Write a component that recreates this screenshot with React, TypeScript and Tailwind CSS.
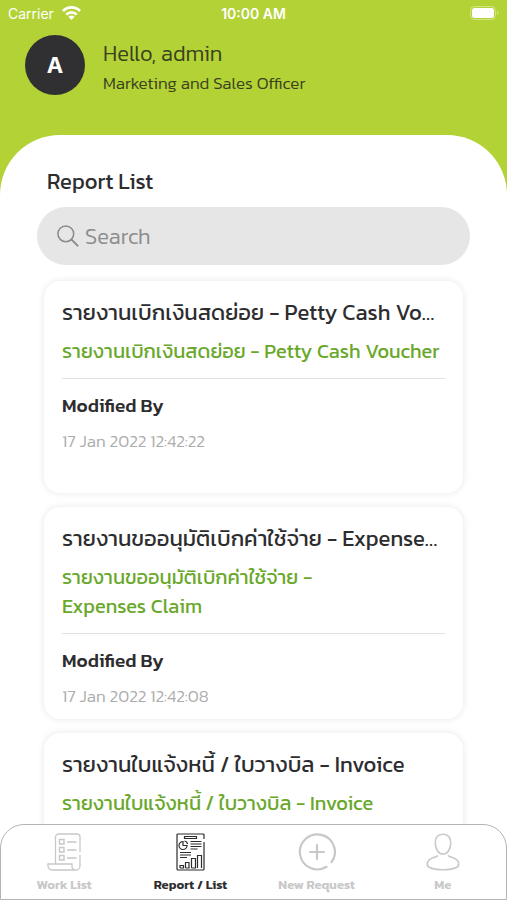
import { ReactNode } from "react";

type Report = {
  title: string;
  modified?: string;
};

const reports: Report[] = [
  {
    title: "รายงานเบิกเงินสดย่อย - Petty Cash Voucher",
    modified: "17 Jan 2022 12:42:22",
  },
  {
    title: "รายงานขออนุมัติเบิกค่าใช้จ่าย - Expenses\u00a0Claim",
    modified: "17 Jan 2022 12:42:08",
  },
  {
    title: "รายงานใบแจ้งหนี้ / ใบวางบิล - Invoice",
  },
];

const WifiIcon = () => (
  <svg className="w-[19px] h-[14px]" viewBox="0 0 19 14" fill="none" stroke="#fff" strokeWidth="2.7">
    <path d="M1 5a12 12 0 0 1 17 0" />
    <path d="M4.2 8.6a7.6 7.6 0 0 1 10.6 0" />
    <path d="M9.5 14 6.4 10.8a4.4 4.4 0 0 1 6.2 0Z" fill="#fff" stroke="none" />
  </svg>
);

const BatteryIcon = () => (
  <svg className="w-[29px] h-[14px]" viewBox="0 0 29 14">
    <rect x="0.5" y="0.5" width="25" height="13" rx="4" fill="none" stroke="#fff" strokeOpacity="0.4" />
    <rect x="2" y="2" width="22" height="10" rx="2.5" fill="#fff" />
    <path d="M27 5v4c2-.8 2-3.2 0-4Z" fill="#fff" fillOpacity="0.4" />
  </svg>
);

const SearchIcon = () => (
  <svg className="w-[22px] h-[22px] shrink-0" viewBox="0 0 22 22" fill="none" stroke="#8b8b8b" strokeLinecap="round">
    <circle cx="8.8" cy="8.8" r="7.9" strokeWidth="1.5" />
    <path d="m14.6 14.6 6 6" strokeWidth="2" />
  </svg>
);

const WorkIcon = () => (
  <svg className="w-[34px] h-[38px]" viewBox="0 0 34 38" fill="none" stroke="currentColor" strokeWidth="1.3">
    <path d="M8.5 31V4a3 3 0 0 1 3-3H30a3 3 0 0 1 3 3v15M33 22v11a4 4 0 0 1-4 4H5a4 4 0 0 1-4-4v-2h24v2.5a3.5 3.5 0 0 0 4 3.5" />
    <path
      d="M12.5 6.5h4.5v4.5h-4.5ZM12.5 14.5h4.5v4.5h-4.5ZM12.5 22.5h4.5v4.5h-4.5ZM20 9h9.5M20 17h9.5M20 25h9.5"
      strokeWidth="1.5"
    />
  </svg>
);

const ReportIcon = () => (
  <svg className="w-[29px] h-[38px]" viewBox="0 0 29 38" fill="none" stroke="currentColor" strokeWidth="1.2">
    <path d="M28 6V2a1 1 0 0 0-1-1H2a1 1 0 0 0-1 1v34a1 1 0 0 0 1 1h25a1 1 0 0 0 1-1V9" />
    <path d="M8.5 3.5h12v2h-12Z" />
    <path d="M7 8.5a4 4 0 1 0 4 4H7ZM8.5 8a3.5 3.5 0 0 1 3 3" />
    <path d="M14.5 8.5h11M14.5 11h11M14.5 13.5h11M14.5 16h7M4 19.5h11M4 22h11M4 24.5h7" strokeWidth="1" />
    <path d="M4 35v-2.500h3.500V35H4M9.500 35v-5.500h3.500V35h-3.500M15.500 35V25.500h4V35h-4M21.500 35V22.500h4V35" />
  </svg>
);

const AddIcon = () => (
  <svg className="w-[38px] h-[38px]" viewBox="0 0 38 38" fill="none" stroke="currentColor" strokeWidth="2.2" strokeLinecap="round">
    <path d="M28.5 33.8A17.5 17.5 0 1 1 33.5 29.2" />
    <path d="M19 12v14M12 19h14" />
  </svg>
);

const MeIcon = () => (
  <svg className="w-[34px] h-[38px]" viewBox="0 0 34 38" fill="none" stroke="currentColor" strokeWidth="1.6" strokeLinecap="round">
    <path d="M17 1.2c5 0 8 3.3 7.7 9-.2 6.3-3.2 10.8-7.7 10.8S9.5 16.5 9.3 10.2c-.3-5.700 2.700-9 7.700-9Z" />
    <path d="M11.5 22.8C8.5 25.3 2 24.5 1.3 30.5c-.3 2 .3 2.8 2 3.8 4.5 2.4 9 2.5 13.7 2.5s9.2-.1 13.7-2.5c1.7-1 2.3-1.8 2-3.8-.7-6-7.2-5.2-10.2-7.700" />
  </svg>
);

const ReportCard = ({ report }: { report: Report }) => {
  return (
    <li className="min-h-[212px] shrink-0 rounded-2xl bg-white px-[18px] pt-4 shadow-[0_0_7px_rgba(0,0,0,0.1)]">
      <h2 className="truncate text-[22px] leading-[32px] text-[#2d2d2f]">{report.title}</h2>
      <p className="mt-2 text-[20px] leading-[29px] text-[#69a82b]">{report.title}</p>
      <hr className="mt-3 border-[#e2e2e2]" />
      <p className="mt-3 text-[19px] leading-[30px] font-medium text-[#2d2d2f]">Modified By</p>
      {report.modified && (
        <p className="mt-1 text-[17px] leading-[32px] font-light text-[#acacac]">{report.modified}</p>
      )}
    </li>
  );
};

const Tab = ({ label, icon, active }: { label: string; icon: ReactNode; active?: boolean }) => {
  return (
    <a
      href="#"
      aria-current={active ? "page" : undefined}
      className={`flex flex-1 flex-col items-center gap-1 text-[13px] leading-[20px] font-semibold ${active ? "text-[#2d2d2f]" : "text-[#c8c8c8]"}`}
    >
      {icon}
      {label}
    </a>
  );
};

const App = () => {
  return (
    <div className="flex h-screen flex-col bg-[#b2d236] font-['Kanit','Roboto','Noto_Sans_Thai',sans-serif]">
      <div className="grid h-[26px] shrink-0 grid-cols-3 items-center px-2 font-['Inter',sans-serif] text-[14px] text-white">
        <div className="flex items-center gap-2">
          Carrier
          <WifiIcon />
        </div>
        <div className="text-center font-semibold">10:00 AM</div>
        <div className="flex justify-end">
          <BatteryIcon />
        </div>
      </div>

      <header className="flex shrink-0 items-start gap-[18px] px-[25px] pt-[9px] pb-[38px] text-[#3a4220]">
        <div className="flex size-[60px] items-center justify-center rounded-full bg-[#303032] font-['Inter',sans-serif] text-[22px] font-bold text-white">
          A
        </div>
        <div className="pt-1">
          <p className="text-[22px] leading-[30px] font-light">Hello, admin</p>
          <p className="text-[17px] leading-[28px] font-light">Marketing and Sales Officer</p>
        </div>
      </header>

      <main className="flex min-h-0 flex-1 flex-col rounded-t-[60px] bg-white pt-8">
        <h1 className="px-[47px] text-[22px] leading-[30px] text-[#2d2d2f]">Report List</h1>
        <label className="mx-[37px] mt-[10px] flex h-[58px] shrink-0 items-center gap-[6px] rounded-full bg-[#e6e6e6] px-5">
          <SearchIcon />
          <input
            type="search"
            aria-label="Search"
            placeholder="Search"
            className="w-full bg-transparent text-[22px] font-light text-[#2d2d2f] outline-none placeholder:text-[#8c8c8c]"
          />
        </label>
        <ul className="mt-2 flex min-h-0 flex-1 flex-col gap-[14px] overflow-y-auto px-[44px] pt-2 [scrollbar-width:none]">
          {reports.map((report) => (
            <ReportCard key={report.title} report={report} />
          ))}
        </ul>
      </main>

      <div className="shrink-0 bg-white">
        <nav className="flex rounded-t-[24px] border border-[#b4b4b4] bg-white pt-2 pb-1">
          <Tab label="Work List" icon={<WorkIcon />} />
          <Tab label="Report / List" icon={<ReportIcon />} active />
          <Tab label="New Request" icon={<AddIcon />} />
          <Tab label="Me" icon={<MeIcon />} />
        </nav>
      </div>
    </div>
  );
};

export default App;
